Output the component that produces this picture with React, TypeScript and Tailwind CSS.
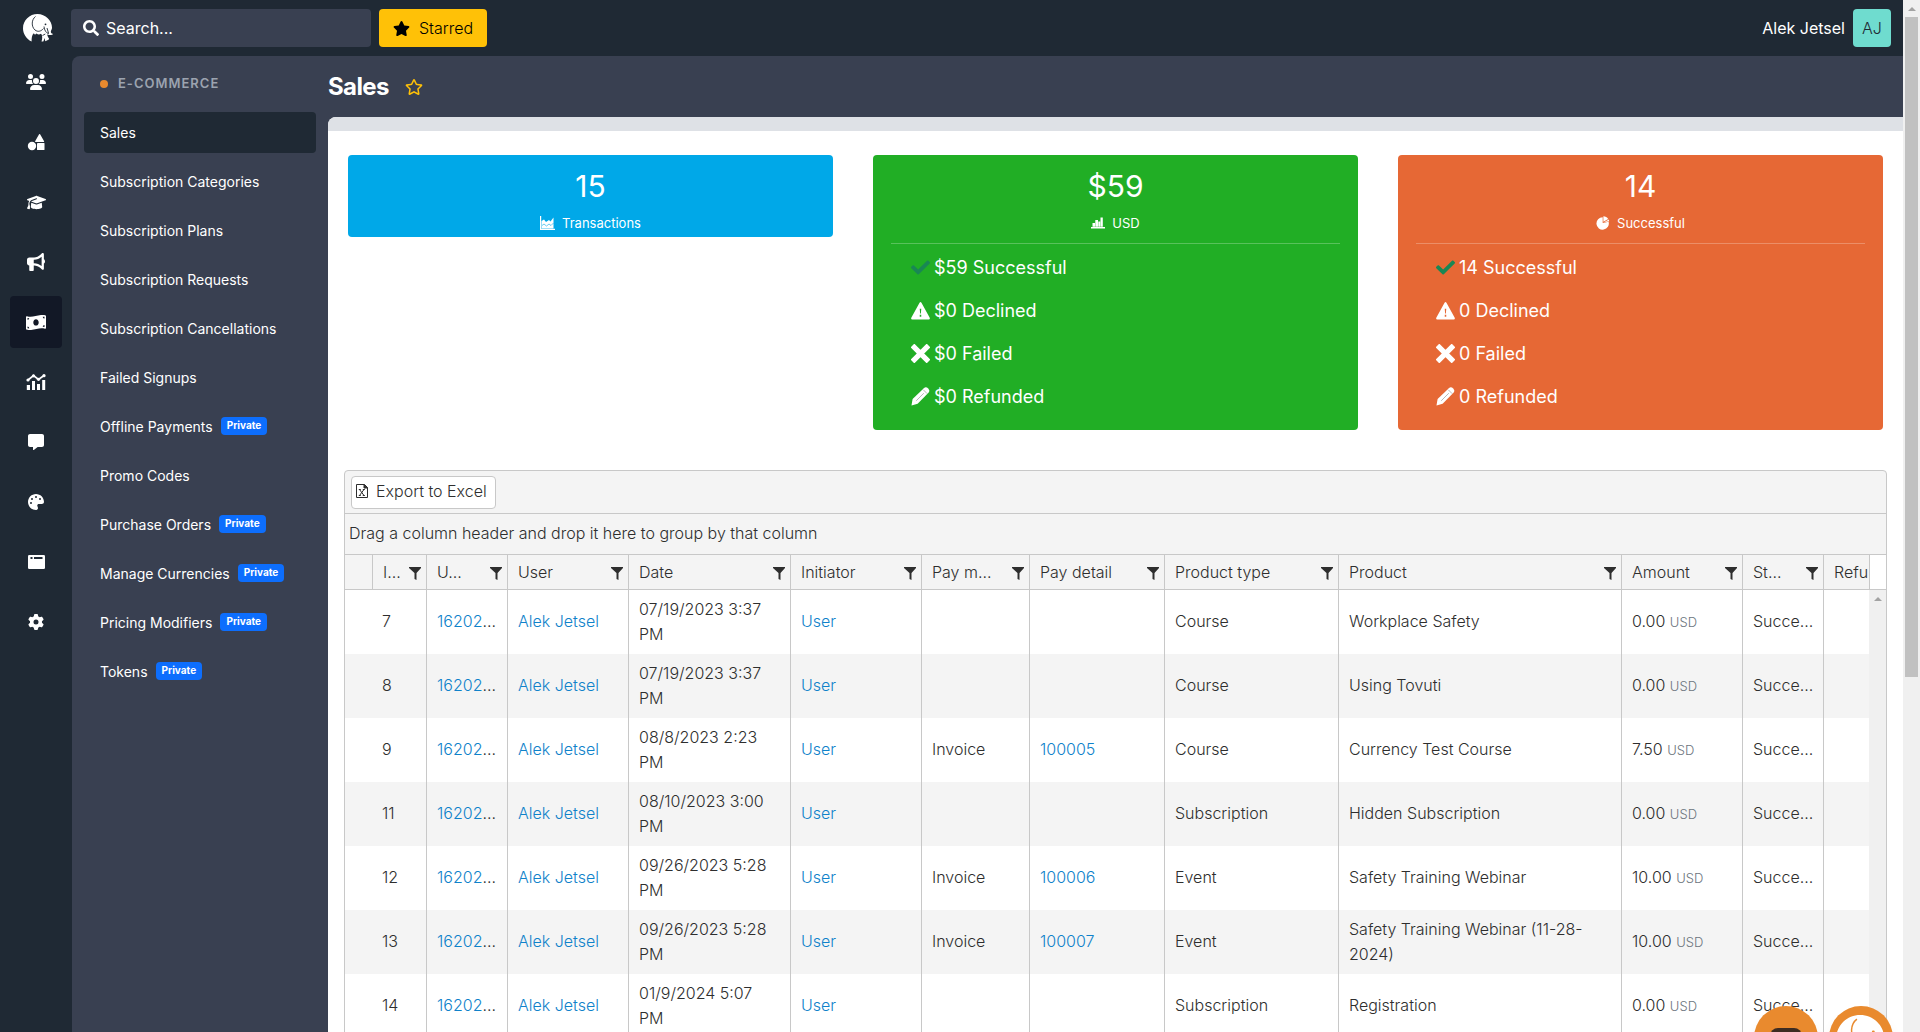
import React from 'react';
import { FaSearch, FaStar, FaRegStar, FaCheck } from 'react-icons/fa';
import { FaUsers, FaGraduationCap, FaBullhorn, FaMessage, FaPalette, FaGear } from 'react-icons/fa6';

interface NavItem {
    label: string;
    isPrivate?: boolean;
}

interface Sale {
    id: string;
    date: string;
    method: string;
    detail: string;
    type: string;
    product: string;
    amount: string;
}

interface StatCardProps {
    value: string;
    label: string;
    icon: React.ReactNode;
    color: string;
    prefix?: string;
    counts?: string[];
}

const navItems: NavItem[] = [
    { label: 'Sales' },
    { label: 'Subscription Categories' },
    { label: 'Subscription Plans' },
    { label: 'Subscription Requests' },
    { label: 'Subscription Cancellations' },
    { label: 'Failed Signups' },
    { label: 'Offline Payments', isPrivate: true },
    { label: 'Promo Codes' },
    { label: 'Purchase Orders', isPrivate: true },
    { label: 'Manage Currencies', isPrivate: true },
    { label: 'Pricing Modifiers', isPrivate: true },
    { label: 'Tokens', isPrivate: true },
];

const columns = [
    { label: 'I...', width: 'w-[54px]' },
    { label: 'U...', width: 'w-[81px]' },
    { label: 'User', width: 'w-[121px]' },
    { label: 'Date', width: 'w-[162px]' },
    { label: 'Initiator', width: 'w-[131px]' },
    { label: 'Pay m...', width: 'w-[108px]' },
    { label: 'Pay detail', width: 'w-[135px]' },
    { label: 'Product type', width: 'w-[174px]' },
    { label: 'Product', width: '' },
    { label: 'Amount', width: 'w-[121px]' },
    { label: 'St...', width: 'w-[81px]' },
];

const sales: Sale[] = [
    { id: '7', date: '07/19/2023 3:37 PM', method: '', detail: '', type: 'Course', product: 'Workplace Safety', amount: '0.00' },
    { id: '8', date: '07/19/2023 3:37 PM', method: '', detail: '', type: 'Course', product: 'Using Tovuti', amount: '0.00' },
    { id: '9', date: '08/8/2023 2:23 PM', method: 'Invoice', detail: '100005', type: 'Course', product: 'Currency Test Course', amount: '7.50' },
    { id: '11', date: '08/10/2023 3:00 PM', method: '', detail: '', type: 'Subscription', product: 'Hidden Subscription', amount: '0.00' },
    { id: '12', date: '09/26/2023 5:28 PM', method: 'Invoice', detail: '100006', type: 'Event', product: 'Safety Training Webinar', amount: '10.00' },
    { id: '13', date: '09/26/2023 5:28 PM', method: 'Invoice', detail: '100007', type: 'Event', product: 'Safety Training Webinar (11-28-2024)', amount: '10.00' },
    { id: '14', date: '01/9/2024 5:07 PM', method: '', detail: '', type: 'Subscription', product: 'Registration', amount: '0.00' },
];

const ElephantIcon = ({ className, line }: { className: string; line: string }) => (
    <svg viewBox="0 0 30 28" className={className} aria-hidden="true">
        <path
            fill="currentColor"
            d="M14.500 0C6.500 0 0 6.300 0 14.200c0 5.200 3 10.500 8.600 13.300 0-3.500.2-6.500 2.200-8.300l1.200 1.500 1.500-1.200c1.500 1.200 3 1.200 4.500.2 1.500 1.500 1.500 4.800.5 7.800h1.800l1.500-3.500.4 3.200c1.500-.4 3-1.200 4-2.200-1-1.500-1.700-3-2.200-4.800 1.700 1.200 4 1.200 6.500-.3-2.200 0-3-1-2.500-3.200.8-1.200 1-2.200 1-3.200C29 6.500 22.500 0 14.500 0z"
        />
        <path fill="none" stroke={line} strokeWidth=".9" d="M12.500 2.500C8.500 5.500 8 12.500 12 16c2.700 2.200 6 1.500 8.500-1.500M21 12.500c.3 3.700 2 6.300 5 7.500M24 14l1.500 5M19.500 21.500l2.800-1.500" />
        <circle cx="22.500" cy="10.300" r=".9" fill={line} />
    </svg>
);

const ShapesIcon = () => (
    <svg viewBox="0 0 18 18" className="size-[18px]" fill="currentColor">
        <circle cx="5" cy="13" r="4.200" />
        <path d="M12.100 1.300q.5-.8 1 0l4 7q.4.700-.5.700H8.600q-.9 0-.5-.7z" />
        <rect x="10" y="9.900" width="7.500" height="7.200" rx=".7" />
    </svg>
);

const MoneyIcon = () => (
    <svg viewBox="0 0 20 15" className="h-[15px] w-5" fill="currentColor">
        <path
            fillRule="evenodd"
            d="M0 2q0-1 1-.8c6 2 11-2.300 18-1q1 .2 1 1V13q0 1-1 .8c-6-2-11 2.300-18 1q-1-.2-1-1zM10 4.200c-1.600 0-2.700 1.400-2.700 3.200s1.100 3.200 2.700 3.200 2.700-1.400 2.700-3.200S11.600 4.200 10 4.200zM1.500 3v1.800c1 0 1.700-.8 1.700-1.600zM1.500 11.500v1.700l1.700.2c0-1-.7-1.900-1.700-1.900zM18.500 1.800l-1.700-.1c0 1 .7 1.800 1.700 1.800zM18.500 10c-1 0-1.700.8-1.700 1.700l1.700.2z"
        />
    </svg>
);

const AnalyticsIcon = () => (
    <svg viewBox="0 0 20 16" className="h-4 w-5" fill="currentColor">
        <path d="M.800 11h3.200v5H.8zM6 7h3v9H6zM11 10h3v6h-3zM16.200 6h3v10h-3z" />
        <path d="M2 6L7.500 1.500l5 4L18 1.500" fill="none" stroke="currentColor" strokeWidth="1.700" />
        <circle cx="2" cy="6" r="1.600" />
        <circle cx="7.500" cy="1.800" r="1.600" />
        <circle cx="12.500" cy="5.300" r="1.600" />
        <circle cx="18" cy="1.700" r="1.600" />
    </svg>
);

const WindowIcon = () => (
    <svg viewBox="0 0 17 14" className="h-[14px] w-[17px]">
        <rect width="17" height="14" rx="1.300" fill="currentColor" />
        <path d="M2.500 3h2M6 3h8.500" stroke="#1f2934" strokeWidth="2" />
    </svg>
);

const AreaChartIcon = () => (
    <svg viewBox="0 0 15 14" className="h-[14px] w-[15px]" fill="currentColor">
        <path d="M0 0h1.200v12.800H15V14H0z" />
        <path d="M1.500 5l2.500-1.500L6 6l3-2 1.500 1.500L13.500 1.500v11h-12z" />
        <path d="M2 9.500l2-1.500 2.500 2L9 8l2 1.500L13.500 7" fill="none" stroke="#00a8e8" strokeWidth=".6" />
    </svg>
);

const BarChartIcon = () => (
    <svg viewBox="0 0 14 12" className="h-3 w-[14px]" fill="currentColor">
        <path d="M0 10h14v1.500H0zM1.500 6H4v3.700H1.500zM4.300 3H7v6.700H4.300zM7.300 4.500h1.900v5.200H7.300zM9.500.5h2.300v9.200H9.500z" />
    </svg>
);

const PieChartIcon = () => (
    <svg viewBox="0 0 14 14" className="size-[14px]" fill="currentColor">
        <path d="M6.700 1.300V7l5.900-1.200A6.200 6.200 0 1 1 6.700 1.300z" />
        <path d="M7.400 5.800V.2c2 .1 3.700 1 4.800 2.700z" />
        <path d="M8 6.200l4.800-2.600.4 1.600z" />
    </svg>
);

const WarningIcon = () => (
    <svg viewBox="0 0 20 20" className="h-5 w-[19px]" fill="currentColor">
        <path fillRule="evenodd" d="M9 1.200q1-1.400 2 0l8.700 16q.6 1.600-1 1.800H1.300q-1.600-.2-1-1.800zM9.200 7.500l.4 5h.8l.4-5zM9.200 14v2h1.600v-2z" />
    </svg>
);

const CrossIcon = () => (
    <svg viewBox="0 0 20 20" className="size-[19px]">
        <path d="M3.500 3.500l13 13M16.500 3.500l-13 13" stroke="currentColor" strokeWidth="5.500" strokeLinecap="square" />
    </svg>
);

const PencilIcon = () => (
    <svg viewBox="0 0 20 20" className="size-[19px]">
        <path d="M.500 19.500l1.200-7L13.500 1.200q2.300-1.900 4.600.3 2.200 2.300.3 4.600L7 17.700z" fill="currentColor" />
        <path d="M5.500 14.500l8-8M13 3l4 4" stroke="rgba(0,0,0,0.3)" strokeWidth="1" />
    </svg>
);

const ExcelIcon = () => (
    <svg viewBox="0 0 12 14" className="h-[14px] w-3" fill="none" stroke="currentColor">
        <path d="M.5.5h8l3 3v10H.5z" />
        <path d="M8 .5v3.500h3.500z" fill="currentColor" />
        <path d="M3.500 5.500l4.500 6M8 5.500l-4.500 6M2.800 5.500h2M6.800 5.500h2M2.800 11.500h2M6.800 11.500h2" />
    </svg>
);

const FilterIcon = () => (
    <svg viewBox="0 0 12 13" className="h-[13px] w-3" fill="currentColor">
        <path d="M0 0h12v1L7.500 6v7l-2-1V6L0 1z" />
    </svg>
);

const railItems = [
    { label: 'Users', icon: <FaUsers size={20} /> },
    { label: 'Content', icon: <ShapesIcon /> },
    { label: 'Learning', icon: <FaGraduationCap size={19} /> },
    { label: 'Marketing', icon: <FaBullhorn size={18} /> },
    { label: 'E-Commerce', icon: <MoneyIcon /> },
    { label: 'Analytics', icon: <AnalyticsIcon /> },
    { label: 'Messages', icon: <FaMessage size={16} /> },
    { label: 'Design', icon: <FaPalette size={16} /> },
    { label: 'Pages', icon: <WindowIcon /> },
    { label: 'Settings', icon: <FaGear size={16} /> },
];

const StatCard: React.FC<StatCardProps> = ({ value, label, icon, color, prefix = '', counts }) => (
    <section className={`${color} rounded px-[18px] text-white`}>
        <div className="pt-[11px] text-center text-[30px] leading-[40px]">{value}</div>
        <div className="flex h-[31px] items-end justify-center gap-[7px] pb-1 text-[13px] leading-5">
            <span className="flex h-5 items-center">{icon}</span>
            {label}
        </div>
        {counts && (
            <ul className="mt-[6px] border-t border-white/25 px-5 pt-[2px] pb-3 text-lg leading-[43px]">
                <li className="flex items-center gap-1">
                    <FaCheck size={19} className="text-[#198754]" />
                    {prefix + counts[0]} Successful
                </li>
                <li className="flex items-center gap-1"><WarningIcon />{prefix + counts[1]} Declined</li>
                <li className="flex items-center gap-1"><CrossIcon />{prefix + counts[2]} Failed</li>
                <li className="flex items-center gap-1"><PencilIcon />{prefix + counts[3]} Refunded</li>
            </ul>
        )}
    </section>
);

const SalesGrid = () => (
    <div className="mx-4 mt-10 rounded-t border border-[#c8c8c8] bg-[#f4f4f4] text-base font-light text-[#2e2e2e]">
        <div className="flex h-[43px] items-center border-b border-[#c8c8c8] px-[6px]">
            <button className="flex h-[33px] items-center gap-2 rounded border border-[#c8c8c8] bg-white pr-2 pb-[2px] pl-1">
                <ExcelIcon />
                Export to Excel
            </button>
        </div>
        <div className="flex h-[41px] items-center border-b border-[#c8c8c8] px-1 pb-[2px]">
            Drag a column header and drop it here to group by that column
        </div>
        <div className="flex">
            <div className="min-w-0 flex-1">
                <table className="w-full table-fixed border-separate border-spacing-0 text-left">
                    <thead>
                        <tr className="h-[35px]">
                            <th className="w-[27px] border-b border-[#c8c8c8]" />
                            {columns.map((column) => (
                                <th key={column.label} className={`${column.width} border-b border-l border-[#c8c8c8] pr-[5px] pl-[10px] font-light`}>
                                    <div className="flex items-center justify-between whitespace-nowrap">
                                        {column.label}
                                        <button aria-label={`Filter ${column.label}`} className="pt-[2px]"><FilterIcon /></button>
                                    </div>
                                </th>
                            ))}
                            <th className="w-[46px] overflow-hidden border-b border-l border-[#c8c8c8] pl-[10px] font-light whitespace-nowrap">Refu</th>
                        </tr>
                    </thead>
                    <tbody className="leading-[25px]">
                        {sales.map((sale) => (
                            <tr key={sale.id} className="h-16 odd:bg-white [&>td]:border-[#c8c8c8] [&>td]:px-[10px] [&>td]:pt-0 [&>td]:pb-px">
                                <td />
                                <td>{sale.id}</td>
                                <td className="border-l whitespace-nowrap"><a href="#transaction" className="text-[#0f82ca]">16202</a>...</td>
                                <td className="border-l whitespace-nowrap"><a href="#user" className="text-[#0f82ca]">Alek Jetsel</a></td>
                                <td className="border-l">{sale.date}</td>
                                <td className="border-l"><a href="#initiator" className="text-[#0f82ca]">User</a></td>
                                <td className="border-l">{sale.method}</td>
                                <td className="border-l">{sale.detail && <a href="#invoice" className="text-[#0f82ca]">{sale.detail}</a>}</td>
                                <td className="border-l">{sale.type}</td>
                                <td className="border-l">{sale.product}</td>
                                <td className="border-l whitespace-nowrap">{sale.amount} <span className="text-[13px] text-[#6c757d]">USD</span></td>
                                <td className="border-l whitespace-nowrap">Succe...</td>
                                <td className="border-l" />
                            </tr>
                        ))}
                    </tbody>
                </table>
            </div>
            {/* Scroll gutter */}
            <div className="w-[17px] bg-[#f0f0f0]">
                <div className="h-[35px] border-b border-l border-[#c8c8c8] bg-white" />
                <div className="flex h-[17px] items-center justify-center">
                    <svg viewBox="0 0 8 4" className="h-1 w-2" fill="#a3a3a3"><path d="M0 4l4-4 4 4z" /></svg>
                </div>
            </div>
        </div>
    </div>
);

const App: React.FC = () => (
    <div className="flex h-screen overflow-hidden bg-[#1f2934] font-['Inter',sans-serif] text-white">
        <div className="flex min-w-0 flex-1 flex-col">
            <header className="flex h-14 shrink-0 items-center pr-3">
                <div className="flex w-[71px] shrink-0 justify-center pl-1">
                    <ElephantIcon className="h-7 w-[30px]" line="#1f2934" />
                </div>
                <label className="flex h-[38px] w-[300px] items-center gap-[7px] rounded bg-[#394051] pl-3">
                    <FaSearch size={16} className="shrink-0" />
                    <input aria-label="Search" placeholder="Search..." className="w-full bg-transparent text-base outline-none placeholder:text-white" />
                </label>
                <button className="ml-2 flex h-[38px] items-center gap-[9px] rounded bg-[#ffc107] px-[14px] text-base font-light text-black">
                    <FaStar size={17} />
                    Starred
                </button>
                <span className="ml-auto text-base">Alek Jetsel</span>
                <button className="ml-2 size-[38px] rounded bg-[#6fdccf] text-base font-light text-[#1f2934]">AJ</button>
            </header>

            <div className="flex min-h-0 flex-1">
                <nav aria-label="Main" className="flex w-[72px] shrink-0 flex-col items-center gap-2">
                    {railItems.map((item) => (
                        <button
                            key={item.label}
                            aria-label={item.label}
                            className={`flex size-[52px] shrink-0 items-center justify-center rounded ${item.label === 'E-Commerce' ? 'bg-[#121826]' : ''}`}
                        >
                            {item.icon}
                        </button>
                    ))}
                </nav>

                <div className="flex min-w-0 flex-1 rounded-tl-lg bg-[#394051]">
                    <aside className="w-64 shrink-0 px-3">
                        <h2 className="flex h-14 items-center gap-[10px] px-4 text-[13px] font-semibold tracking-[1px] text-[#9ca3af]">
                            <span className="size-2 rounded-full bg-[#e98a2e]" />
                            E-COMMERCE
                        </h2>
                        <ul className="flex flex-col gap-2 text-sm">
                            {navItems.map((item, index) => (
                                <li key={item.label}>
                                    <a href={`#${index}`} className={`flex h-[41px] items-center gap-2 rounded px-4 ${index === 0 ? 'bg-[#1f2934]' : ''}`}>
                                        {item.label}
                                        {item.isPrivate && <span className="mb-[2px] h-[18px] rounded bg-[#0d6efd] px-[6px] text-[10px] leading-[17px] font-bold">Private</span>}
                                    </a>
                                </li>
                            ))}
                        </ul>
                    </aside>

                    <main className="flex min-w-0 flex-1 flex-col">
                        <div className="flex h-[61px] shrink-0 items-center gap-4">
                            <h1 className="text-2xl font-bold tracking-tight">Sales</h1>
                            <button aria-label="Star this page" className="text-[#ffc107]"><FaRegStar size={18} /></button>
                        </div>
                        <div className="min-h-0 flex-1 overflow-hidden rounded-tl-lg bg-white">
                            <div className="h-[14px] bg-[#dee1e6]" />
                            <div className="mt-6 grid grid-cols-3 items-start gap-10 px-5">
                                <StatCard value="15" label="Transactions" icon={<AreaChartIcon />} color="bg-[#00a8e8]" />
                                <StatCard value="$59" label="USD" icon={<BarChartIcon />} color="bg-[#21ae25]" prefix="$" counts={['59', '0', '0', '0']} />
                                <StatCard value="14" label="Successful" icon={<PieChartIcon />} color="bg-[#e66835]" counts={['14', '0', '0', '0']} />
                            </div>
                            <SalesGrid />
                        </div>
                    </main>
                </div>
            </div>
        </div>

        {/* Window scroll bar */}
        <div className="flex w-[17px] shrink-0 flex-col items-center bg-[#f0f0f0]">
            <div className="flex h-[17px] shrink-0 items-center">
                <svg viewBox="0 0 8 4" className="h-1 w-2" fill="#a3a3a3"><path d="M0 4l4-4 4 4z" /></svg>
            </div>
            <div className="h-[64%] w-[13px] bg-[#c1c1c1]" />
        </div>

        {/* Floating help buttons */}
        <button aria-label="Chat" className="fixed right-[102px] bottom-[-38px] flex size-16 justify-center rounded-full bg-[#e98a2e] pt-[22px] shadow-lg">
            <span className="h-6 w-8 rounded-lg bg-[#3d2c22]" />
        </button>
        <button aria-label="Help" className="fixed right-[27px] bottom-[-38px] flex size-16 items-center justify-center rounded-full bg-[#e98a2e] shadow-lg">
            <ElephantIcon className="h-[46px] w-[50px]" line="#e98a2e" />
        </button>
    </div>
);

export default App;
